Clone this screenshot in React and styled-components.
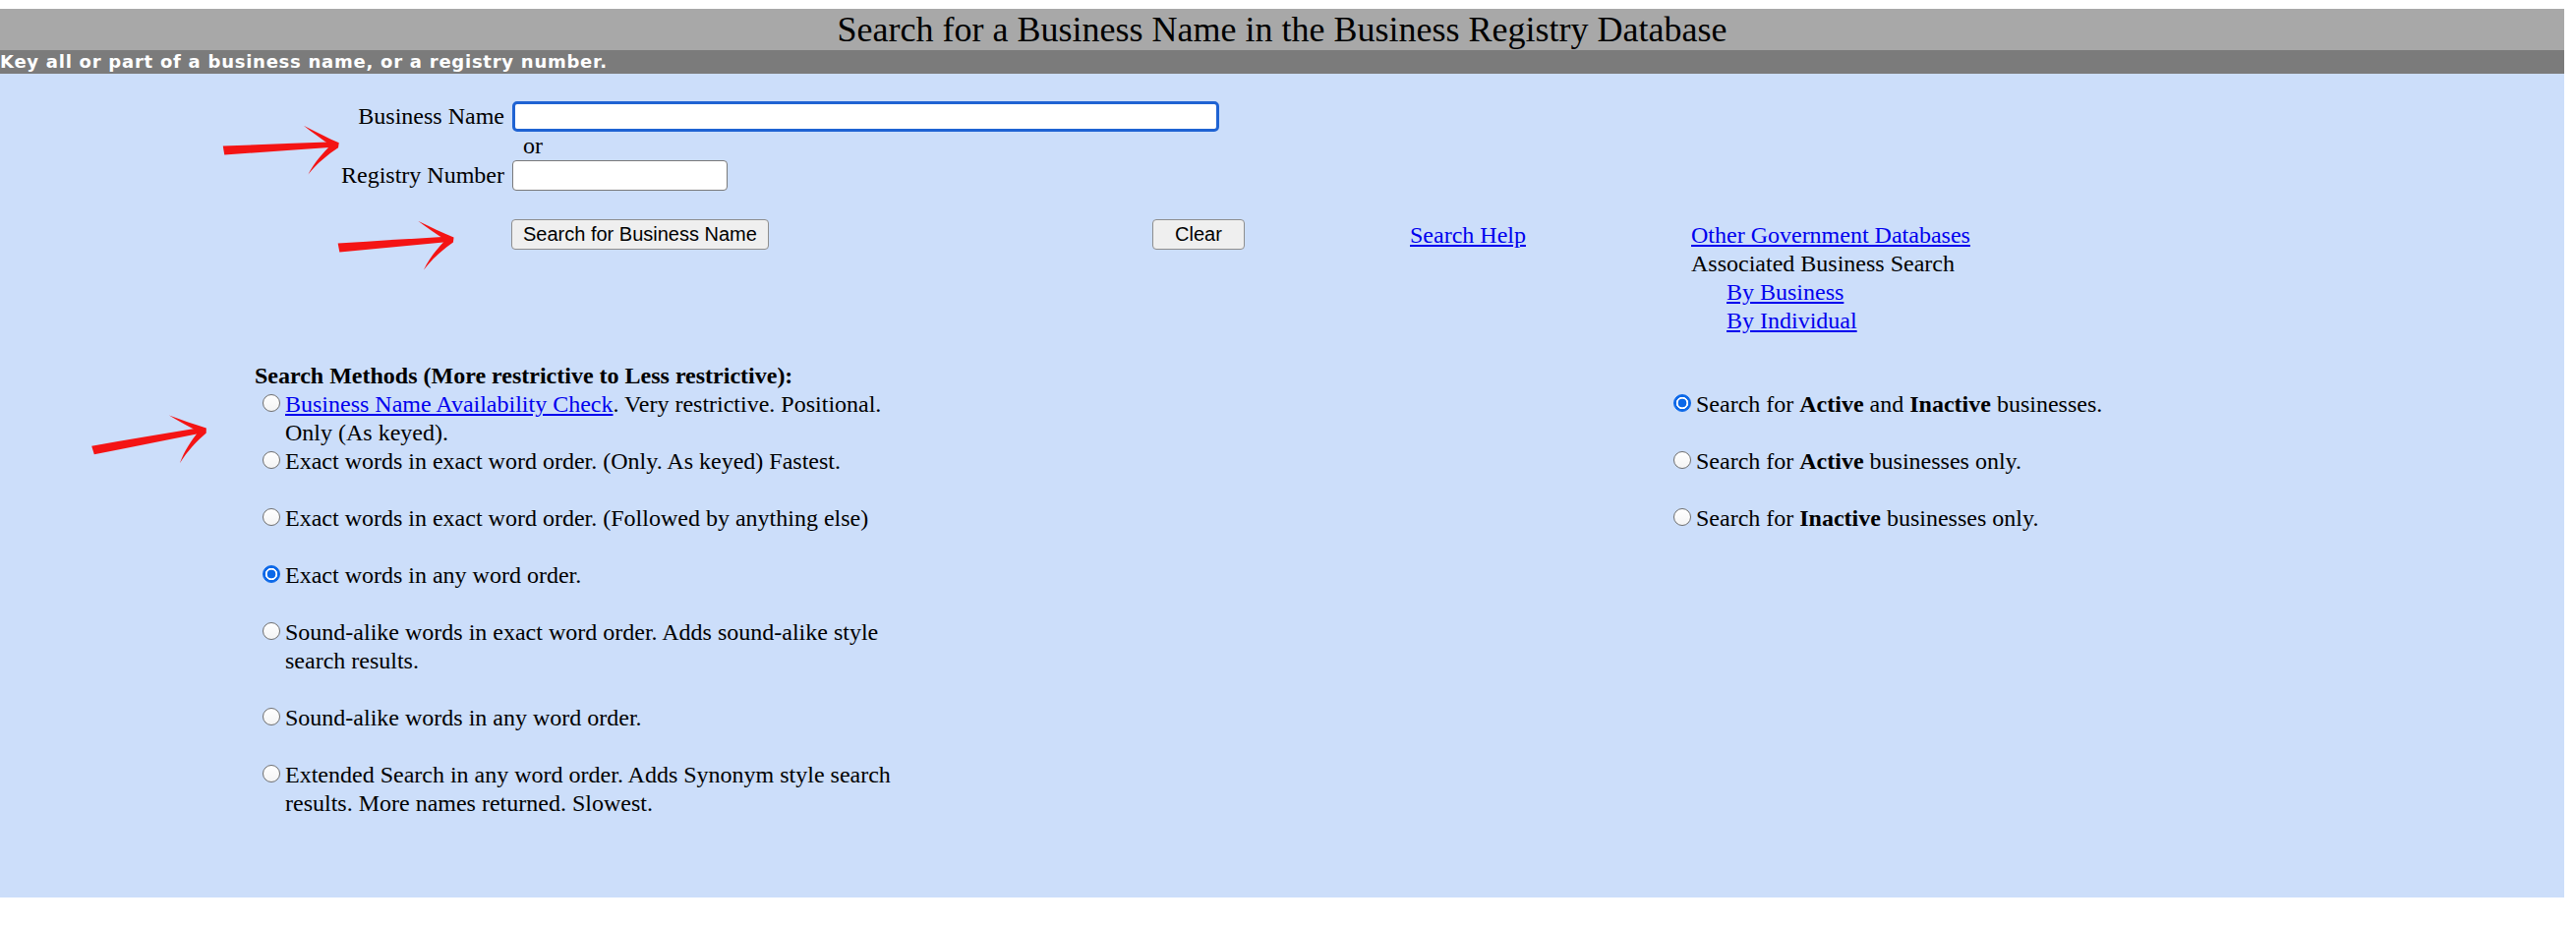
import React from "react";
import styled, { createGlobalStyle, css } from "styled-components";

const GlobalStyle = createGlobalStyle`
  html, body {
    margin: 0;
    padding: 0;
    background: #fff;
  }
  body {
    font-family: "Liberation Serif", "Times New Roman", serif;
    font-size: 24px;
    line-height: 29px;
    color: #000;
  }
`;

const Page = styled.div`
  width: 2608px;
  padding-top: 9px;
`;

const TitleBar = styled.div`
  background: #a8a8a8;
  height: 42px;
  font-size: 36px;
  line-height: 42px;
  text-align: center;
`;

const SubBar = styled.div`
  background: #7b7b7b;
  height: 24px;
  color: #fff;
  font-family: "DejaVu Sans", Verdana, sans-serif;
  font-weight: bold;
  font-size: 18px;
  letter-spacing: 0.75px;
  line-height: 24px;
  white-space: nowrap;
`;

const Main = styled.div`
  position: relative;
  background: #ccdefa;
  height: 838px;
  overflow: hidden;
`;

const FieldGrid = styled.div`
  display: grid;
  grid-template-columns: 513px auto;
  grid-template-rows: 31px 29px 31px;
  column-gap: 8px;
  padding-top: 28px;
  align-items: center;
`;

const Label = styled.label`
  text-align: right;
  white-space: nowrap;
`;

const Or = styled.div`
  grid-column: 2;
  padding-left: 11px;
`;

const TextInput = styled.input`
  box-sizing: border-box;
  width: ${(p) => p.$width}px;
  height: 31px;
  padding: 0 5px;
  border: 1px solid #7a7a7a;
  border-radius: 4px;
  background: #fff;
  font: 20px "Liberation Sans", Arial, sans-serif;
  outline: none;
  ${(p) =>
    p.$focused &&
    css`
      border: 3px solid #1f63d3;
      border-radius: 5px;
    `}
`;

const ActionRow = styled.div`
  display: grid;
  grid-template-columns: 652px 262px 286px auto;
  align-items: start;
  padding-left: 520px;
  margin-top: 29px;
`;

const Button = styled.button`
  justify-self: start;
  font-family: "Liberation Sans", Arial, sans-serif;
  font-size: 20px;
  line-height: 23px;
  padding: 3px ${(p) => p.$pad}px;
  border: 1px solid #8e8e8e;
  border-radius: 4px;
  background: #efefef;
  color: #000;
`;

const LinkCell = styled.div`
  padding-top: 2px;
  white-space: nowrap;
`;

const Link = styled.a`
  color: #0000ee;
  text-decoration: underline;
`;

const Indented = styled.div`
  padding-left: 36px;
`;

const Methods = styled.div`
  padding: 27px 0 0 259px;
`;

const Heading = styled.div`
  font-weight: bold;
`;

const Columns = styled.div`
  display: grid;
  grid-template-columns: 1435px auto;
`;

const OptionList = styled.div`
  display: flex;
  flex-direction: column;
`;

const Option = styled.div`
  display: flex;
  align-items: flex-start;
  margin-bottom: ${(p) => (p.$gap ? 29 : 0)}px;
`;

const Radio = styled.input.attrs({ type: "radio" })`
  appearance: none;
  -webkit-appearance: none;
  box-sizing: border-box;
  flex: none;
  width: 18px;
  height: 18px;
  margin: 4px 5px 0 8px;
  border-radius: 50%;
  border: 1px solid #6f6f6f;
  background: linear-gradient(#fff, #f4f4f4);

  &:checked {
    border-color: #0b68e8;
    background: radial-gradient(
      circle closest-side,
      #0b68e8 0 52%,
      #fff 58% 74%,
      #0b68e8 80%
    );
  }
`;

const OptionText = styled.span`
  ${(p) =>
    p.$width
      ? css`
          width: ${p.$width}px;
        `
      : css`
          white-space: nowrap;
        `}
`;

const Arrows = styled.svg`
  position: absolute;
  left: 0;
  top: 0;
  width: 100%;
  height: 100%;
  pointer-events: none;
`;

// hand drawn arrow, tail at 0,0 pointing right
const Arrow = ({ x, y, angle }) => (
  <g transform={`translate(${x} ${y}) rotate(${angle})`} fill="#f41414">
    <path d="M0,-4.4 Q60,-3.8 114,-2.8 L115,2.6 Q60,3.6 1,4.6 Z" />
    <path d="M83,-21 C95,-14 107,-7 118,-1.5 L117,3.5 C106,10 95,18 85,29 C92,17 101,8 109.5,0.5 C101,-6 92,-13 83,-21 Z" />
  </g>
);

const methods = [
  {
    text: (
      <>
        <Link href="#">Business Name Availability Check</Link>. Very restrictive.
        Positional. Only (As keyed).
      </>
    ),
  },
  { text: "Exact words in exact word order. (Only. As keyed) Fastest.", gap: true },
  { text: "Exact words in exact word order. (Followed by anything else)", gap: true },
  { text: "Exact words in any word order.", gap: true, checked: true },
  {
    text: "Sound-alike words in exact word order. Adds sound-alike style search results.",
    gap: true,
  },
  { text: "Sound-alike words in any word order.", gap: true },
  {
    text: "Extended Search in any word order. Adds Synonym style search results. More names returned. Slowest.",
  },
];

const statuses = [
  {
    text: (
      <>
        Search for <b>Active</b> and <b>Inactive</b> businesses.
      </>
    ),
    checked: true,
  },
  {
    text: (
      <>
        Search for <b>Active</b> businesses only.
      </>
    ),
  },
  {
    text: (
      <>
        Search for <b>Inactive</b> businesses only.
      </>
    ),
  },
];

export default function App() {
  return (
    <Page>
      <GlobalStyle />
      <TitleBar>Search for a Business Name in the Business Registry Database</TitleBar>
      <SubBar>Key all or part of a business name, or a registry number.</SubBar>
      <Main>
        <FieldGrid>
          <Label htmlFor="bizname">Business Name</Label>
          <TextInput id="bizname" $width={719} $focused />
          <Or>or</Or>
          <Label htmlFor="regnum">Registry Number</Label>
          <TextInput id="regnum" $width={219} />
        </FieldGrid>

        <ActionRow>
          <Button $pad={11}>Search for Business Name</Button>
          <Button $pad={22}>Clear</Button>
          <LinkCell>
            <Link href="#">Search Help</Link>
          </LinkCell>
          <LinkCell>
            <Link href="#">Other Government Databases</Link>
            <div>Associated Business Search</div>
            <Indented>
              <Link href="#">By Business</Link>
            </Indented>
            <Indented>
              <Link href="#">By Individual</Link>
            </Indented>
          </LinkCell>
        </ActionRow>

        <Methods>
          <Heading>Search Methods (More restrictive to Less restrictive):</Heading>
          <Columns>
            <OptionList>
              {methods.map((m, i) => (
                <Option key={i} $gap={m.gap}>
                  <Radio name="method" defaultChecked={m.checked} />
                  <OptionText $width={630}>{m.text}</OptionText>
                </Option>
              ))}
            </OptionList>
            <OptionList>
              {statuses.map((s, i) => (
                <Option key={i} $gap>
                  <Radio name="status" defaultChecked={s.checked} />
                  <OptionText>{s.text}</OptionText>
                </Option>
              ))}
            </OptionList>
          </Columns>
        </Methods>

        <Arrows>
          <Arrow x={227} y={78} angle={-3} />
          <Arrow x={344} y={177} angle={-4.4} />
          <Arrow x={94} y={383} angle={-10.3} />
        </Arrows>
      </Main>
    </Page>
  );
}
